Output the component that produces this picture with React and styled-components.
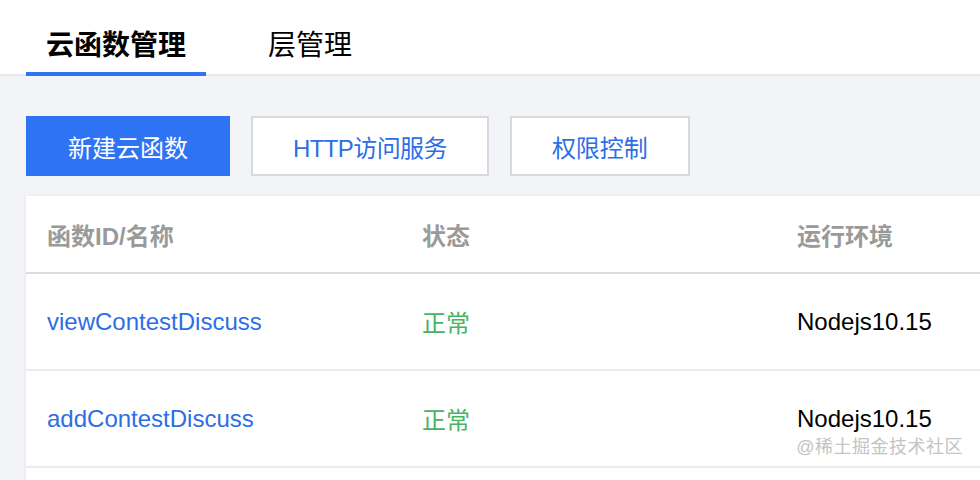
import React from "react";
import styled, { createGlobalStyle } from "styled-components";

const Global = createGlobalStyle`
  html, body { margin: 0; padding: 0; }
  body {
    background: #f3f4f7;
    font-family: "Liberation Sans", "Noto Sans CJK SC", sans-serif;
    overflow: hidden;
  }
`;

const Page = styled.div`
  position: relative;
  width: 980px;
  height: 480px;
  overflow: hidden;
  background: #f3f4f7;
`;

const Header = styled.div`
  display: flex;
  gap: 42px;
  height: 74px;
  padding: 0 26px;
  background: #fff;
  border-bottom: 2px solid #e6e8ec;
`;

const Tab = styled.div`
  box-sizing: border-box;
  height: 76px;
  padding: 32px 20px 0;
  font-size: 28px;
  line-height: 28px;
  color: #000;
  font-weight: ${(p) => (p.$active ? 700 : 400)};
  border-bottom: 4px solid ${(p) => (p.$active ? "#2f73f5" : "transparent")};
`;

const Toolbar = styled.div`
  display: flex;
  gap: 21px;
  padding: 40px 26px 0;
`;

const Button = styled.div`
  box-sizing: border-box;
  height: 60px;
  padding: 0 40px;
  display: flex;
  align-items: center;
  font-size: 24px;
  letter-spacing: ${(p) => (p.$tight ? "-0.6px" : "0")};
  border: 2px solid ${(p) => (p.$primary ? "#2f73f5" : "#d7d9dd")};
  background: ${(p) => (p.$primary ? "#2f73f5" : "#fff")};
  color: ${(p) => (p.$primary ? "#fff" : "#2c6ee6")};
`;

const Card = styled.div`
  margin: 20px 0 0 26px;
  width: 1000px;
  min-height: 320px;
  background: #fff;
  box-shadow: 0 1px 4px rgba(0, 0, 0, 0.08);
`;

const Row = styled.div`
  display: grid;
  grid-template-columns: 375px 375px 1fr;
  align-items: center;
  padding: 0 21px;
  height: ${(p) => (p.$head ? "76px" : "95px")};
  border-bottom: 2px solid ${(p) => (p.$head ? "#dcdcdc" : "#ececec")};
`;

const HeadCell = styled.div`
  font-size: 24px;
  font-weight: 700;
  color: #9a9a9a;
`;

const NameCell = styled.div`
  font-size: 24px;
  color: #2c6ee6;
`;

const StatusCell = styled.div`
  font-size: 24px;
  color: #46b462;
`;

const EnvCell = styled.div`
  font-size: 24px;
  color: #000;
`;

const Watermark = styled.div`
  position: absolute;
  right: 17px;
  top: 432px;
  font-size: 18px;
  color: #c4c4c4;
  letter-spacing: 0.5px;
`;

const rows = [
  { name: "viewContestDiscuss", status: "正常", env: "Nodejs10.15" },
  { name: "addContestDiscuss", status: "正常", env: "Nodejs10.15" },
];

export default function App() {
  return (
    <Page>
      <Global />
      <Header>
        <Tab $active>云函数管理</Tab>
        <Tab>层管理</Tab>
      </Header>
      <Toolbar>
        <Button $primary>新建云函数</Button>
        <Button $tight>HTTP访问服务</Button>
        <Button>权限控制</Button>
      </Toolbar>
      <Card>
        <Row $head>
          <HeadCell>函数ID/名称</HeadCell>
          <HeadCell>状态</HeadCell>
          <HeadCell>运行环境</HeadCell>
        </Row>
        {rows.map((r) => (
          <Row key={r.name}>
            <NameCell>{r.name}</NameCell>
            <StatusCell>{r.status}</StatusCell>
            <EnvCell>{r.env}</EnvCell>
          </Row>
        ))}
      </Card>
      <Watermark>@稀土掘金技术社区</Watermark>
    </Page>
  );
}
